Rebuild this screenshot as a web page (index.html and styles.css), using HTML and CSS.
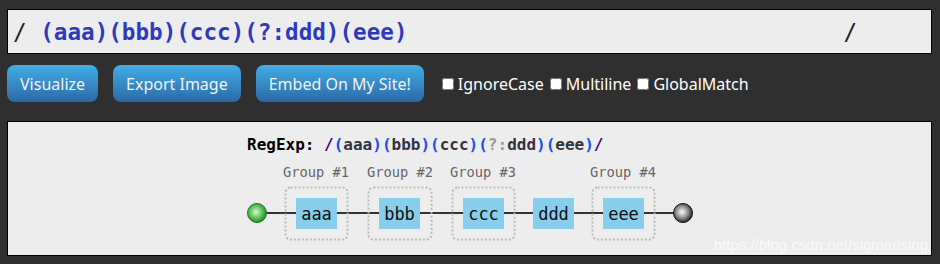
FILE: index.html
```html
<!DOCTYPE html>
<html>
<head>
	<title>Regulex</title>
	<link rel="stylesheet" href="styles.css">
</head>
<body>
	<div class="input-bar">
		<span class="delim">/ </span>
		<span class="expr">(aaa)(bbb)(ccc)(?:ddd)(eee)</span>
		<span class="delim end">/</span>
	</div>
	<div class="toolbar">
		<button class="btn">Visualize</button>
		<button class="btn">Export Image</button>
		<button class="btn">Embed On My Site!</button>
		<div class="flags">
			<label class="flag"><input type="checkbox">IgnoreCase</label>
			<label class="flag"><input type="checkbox">Multiline</label>
			<label class="flag"><input type="checkbox">GlobalMatch</label>
		</div>
	</div>
	<div class="graph">
		<svg class="railroad" width="461" height="133" viewBox="239 122 461 133">
			<defs>
				<radialGradient id="startFill" cx="0.45" cy="0.45" r="0.6">
					<stop offset="0" stop-color="#d6f7d2"/>
					<stop offset="0.55" stop-color="#5cc25a"/>
					<stop offset="1" stop-color="#1b7d1f"/>
				</radialGradient>
				<radialGradient id="endFill" cx="0.45" cy="0.45" r="0.6">
					<stop offset="0" stop-color="#ffffff"/>
					<stop offset="0.55" stop-color="#8a8a8a"/>
					<stop offset="1" stop-color="#111111"/>
				</radialGradient>
			</defs>

			<text class="re-text" x="247" y="150">RegExp: <tspan class="re-delim">/</tspan><tspan class="re-paren">(</tspan><tspan class="re-exact">aaa</tspan><tspan class="re-paren">)(</tspan><tspan class="re-exact">bbb</tspan><tspan class="re-paren">)(</tspan><tspan class="re-exact">ccc</tspan><tspan class="re-paren">)(</tspan><tspan class="re-nc">?:</tspan><tspan class="re-exact">ddd</tspan><tspan class="re-paren">)(</tspan><tspan class="re-exact">eee</tspan><tspan class="re-paren">)</tspan><tspan class="re-delim">/</tspan></text>

			<line class="path" x1="257" y1="213" x2="683" y2="213"/>

			<!-- capture groups -->
			<text class="group-label" x="316" y="177">Group #1</text>
			<rect class="group" x="285.5" y="187.5" width="62" height="52" rx="5"/>
			<text class="group-label" x="400" y="177">Group #2</text>
			<rect class="group" x="368.5" y="187.5" width="63" height="52" rx="5"/>
			<text class="group-label" x="483" y="177">Group #3</text>
			<rect class="group" x="452.5" y="187.5" width="62" height="52" rx="5"/>
			<text class="group-label" x="623" y="177">Group #4</text>
			<rect class="group" x="592.5" y="187.5" width="62" height="52" rx="5"/>

			<rect class="node" x="296" y="198" width="41" height="31"/>
			<text class="node-text" x="316.5" y="219.5">aaa</text>
			<rect class="node" x="379" y="198" width="41" height="31"/>
			<text class="node-text" x="399.5" y="219.5">bbb</text>
			<rect class="node" x="463" y="198" width="41" height="31"/>
			<text class="node-text" x="483.5" y="219.5">ccc</text>
			<rect class="node" x="533" y="198" width="41" height="31"/>
			<text class="node-text" x="553.5" y="219.5">ddd</text>
			<rect class="node" x="603" y="198" width="41" height="31"/>
			<text class="node-text" x="623.5" y="219.5">eee</text>

			<circle cx="257" cy="213" r="9.5" fill="url(#startFill)" stroke="#1d7a20" stroke-width="1"/>
			<circle cx="683" cy="213" r="9.5" fill="url(#endFill)" stroke="#111" stroke-width="1"/>
		</svg>
		<span class="watermark">https://blog.csdn.net/sigmarising</span>
	</div>
</body>
</html>
```

FILE: styles.css
```css
body {
	margin: 0;
	padding: 9px 8px 0 7px;
	background: #2f2f2f;
	font: 16px "Noto Sans", "Open Sans", sans-serif;
	color: #fff;
}
.input-bar {
	display: flex;
	align-items: center;
	height: 43px;
	border: 1px solid #000;
	background: #ededed;
	padding-left: 5px;
	font: bold 22.6px "DejaVu Sans Mono", monospace;
	color: #2d3abf;
}
.delim {
	font-weight: normal;
	color: #222;
	white-space: pre;
}
.expr {
	flex: 1;
}
.delim.end {
	margin-right: 74px;
}
.toolbar {
	display: flex;
	align-items: center;
	margin-top: 11px;
	height: 37px;
}
.btn {
	height: 37px;
	padding: 0 13px;
	margin-right: 15px;
	border: 0;
	border-radius: 8px;
	background: linear-gradient(#41aee6, #2c69a8);
	color: #f2f2f2;
	font: inherit;
}
.flags {
	display: flex;
	gap: 6px;
	margin-left: 3px;
}
.flag {
	display: flex;
	align-items: center;
}
.flag input {
	width: 12px;
	height: 12px;
	margin: 0 4px 0 0;
}
.graph {
	position: relative;
	display: flex;
	justify-content: center;
	height: 133px;
	margin-top: 19px;
	border: 1px solid #000;
	background: #ededed;
}
.railroad text {
	font-family: "DejaVu Sans Mono", monospace;
}
.re-text {
	font-size: 16px;
	font-weight: bold;
	fill: #000;
	white-space: pre;
}
.re-delim {
	fill: #4b0082;
}
.re-paren {
	fill: #1a4cf0;
}
.re-exact {
	fill: #334;
}
.re-nc {
	fill: #999;
}
.path {
	stroke: #333;
	stroke-width: 2;
}
.group {
	fill: none;
	stroke: #bbb;
	stroke-width: 2;
	stroke-dasharray: 2 2;
}
.group-label {
	font-size: 13.7px;
	fill: #666;
	text-anchor: middle;
}
.node {
	fill: #87ceeb;
}
.node-text {
	font-size: 17px;
	fill: #111;
	text-anchor: middle;
}
.watermark {
	position: absolute;
	right: 3px;
	bottom: 2px;
	font: 15px "Liberation Sans", Arial, sans-serif;
	color: rgba(255, 255, 255, 0.75);
}
```
